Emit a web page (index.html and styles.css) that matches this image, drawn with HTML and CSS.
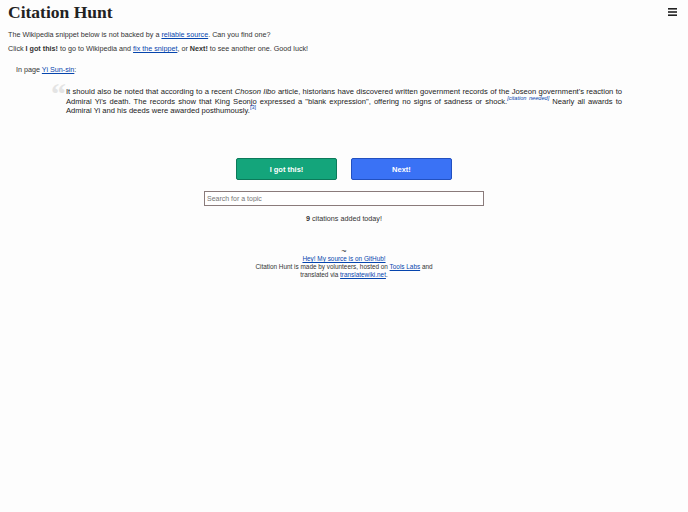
FILE: index.html
```html
<!DOCTYPE html>
<html lang="en">
<head>
    <meta charset="UTF-8">
    <meta name="viewport" content="width=device-width, initial-scale=1.0">
    <title>Citation Hunt</title>
    <link rel="stylesheet" href="styles.css">
</head>
<body>
    <header class="top">
        <h1>Citation Hunt</h1>
        <a class="menu" href="#">
            <!-- hamburger menu -->
            <svg width="9" height="8" viewBox="0 0 9 8">
                <rect x="0" y="0" width="9" height="1.6" fill="#222"/>
                <rect x="0" y="3.2" width="9" height="1.6" fill="#222"/>
                <rect x="0" y="6.4" width="9" height="1.6" fill="#222"/>
            </svg>
        </a>
    </header>

    <p class="intro">The Wikipedia snippet below is not backed by a <a href="#">reliable source</a>. Can you find one?</p>
    <p class="intro">Click <b>I got this!</b> to go to Wikipedia and <a href="#">fix the snippet</a>, or <b>Next!</b> to see another one. Good luck!</p>

    <div class="page-name">In page <a href="#">Yi Sun-sin</a>:</div>

    <!-- The snippet itself -->
    <div class="snippet">
        <span class="quote-mark">&ldquo;</span>
        <p>It should also be noted that according to a recent <i>Choson Ilbo</i> article, historians have discovered written government records of the Joseon government's reaction to Admiral Yi's death. The records show that King Seonjo expressed a "blank expression", offering no signs of sadness or shock.<sup><i><a href="#">[citation needed]</a></i></sup> Nearly all awards to Admiral Yi and his deeds were awarded posthumously.<sup><a href="#">[3]</a></sup></p>
    </div>

    <div class="actions">
        <button class="btn btn-green">I got this!</button>
        <button class="btn btn-blue">Next!</button>
    </div>

    <div class="search">
        <input type="text" placeholder="Search for a topic">
    </div>

    <p class="count"><b>9</b> citations added today!</p>

    <footer>
        <div class="tilde">~</div>
        <a href="#">Hey! My source is on GitHub!</a><br>
        Citation Hunt is made by volunteers, hosted on <a href="#">Tools Labs</a> and<br>
        translated via <a href="#">translatewiki.net</a>.
    </footer>
</body>
</html>
```

FILE: styles.css
```css
body {
    font-family: "Liberation Sans", Arial, sans-serif;
    font-size: 7.2px;
    color: #333;
    background-color: #fdfdfd;
    margin: 0;
    padding: 0 8px;
}
a {
    color: #0645ad;
}
.top {
    display: flex;
    justify-content: space-between;
    align-items: flex-start;
    padding-top: 2px;
}
.top h1 {
    font-family: "Liberation Serif", Georgia, serif;
    font-size: 17.5px;
    color: #222;
    margin: 0;
    line-height: 20px;
}
.menu {
    margin: 6px 3px 0 0;
}
.intro {
    margin: 0;
    line-height: 14px;
}
.top + .intro {
    margin-top: 6px;
}
.page-name {
    margin: 7px 0 0 8px;
    line-height: 14px;
}
.snippet {
    position: relative;
    margin: 10px 58px 0 58px;
}
.snippet p {
    margin: 0;
    font-size: 7.6px;
    text-align: justify;
    line-height: 9.7px;
    color: #222;
}
.quote-mark {
    position: absolute;
    left: -15px;
    top: -8px;
    font-family: "Liberation Serif", Georgia, serif;
    font-size: 30px;
    font-weight: bold;
    color: #e4e4e4;
    line-height: 1;
}
sup {
    font-size: 5.6px;
    line-height: 0;
}
sup a {
    text-decoration: none;
}
.actions {
    display: flex;
    justify-content: center;
    gap: 14px;
    margin-top: 42px;
}
.btn {
    width: 101px;
    height: 22px;
    border-radius: 2px;
    font-family: "Liberation Sans", Arial, sans-serif;
    font-size: 7.5px;
    font-weight: bold;
    color: white;
    cursor: pointer;
}
.btn-green {
    background-color: #14a57b;
    border: 1px solid #0c7a5a;
}
.btn-blue {
    background-color: #3a72f5;
    border: 1px solid #2250c0;
}
.search {
    display: flex;
    justify-content: center;
    margin-top: 11px;
}
.search input {
    width: 280px;
    height: 15px;
    box-sizing: border-box;
    border: 1px solid #8a7b7b;
    font-family: "Liberation Sans", Arial, sans-serif;
    font-size: 7px;
    padding: 0 2px;
    background: white;
}
.count {
    text-align: center;
    margin: 8px 0 0 0;
}
footer {
    text-align: center;
    margin-top: 24px;
    font-size: 6.4px;
    line-height: 8px;
}
.tilde {
    font-size: 9px;
    line-height: 8px;
}
```
